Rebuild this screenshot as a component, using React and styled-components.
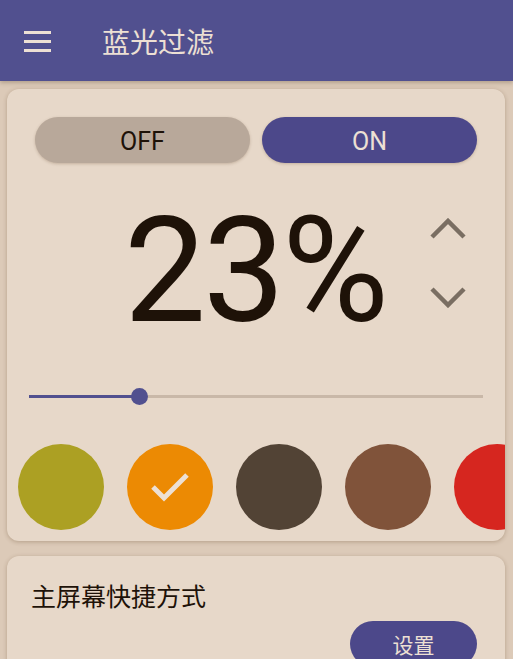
import React from 'react';
import styled, { createGlobalStyle } from 'styled-components';

const GlobalStyle = createGlobalStyle`
  html, body {
    margin: 0;
    padding: 0;
    background: #dccab8;
    font-family: Roboto, "Noto Sans CJK SC", sans-serif;
    overflow: hidden;
  }
`;

const AppBar = styled.header`
  height: 81px;
  background: #51508f;
  display: flex;
  align-items: center;
  padding-left: 24px;
  box-shadow: 0 2px 4px rgba(60, 40, 20, 0.25);
  position: relative;
  z-index: 1;
`;

const MenuIcon = styled.div`
  width: 27px;
  display: flex;
  flex-direction: column;
  gap: 6px;
  margin-right: 51px;
  margin-top: 1px;
  span {
    display: block;
    height: 3px;
    background: #ede0d4;
  }
`;

const Title = styled.h1`
  margin: 0;
  font-family: "Noto Sans CJK SC", sans-serif;
  font-weight: 400;
  font-size: 28px;
  color: #ede0d4;
`;

const Page = styled.main`
  padding: 8px 8px 0 7px;
  display: flex;
  flex-direction: column;
  gap: 15px;
`;

const Card = styled.section`
  background: #e7d8c9;
  border-radius: 12px;
  box-shadow: 0 1px 4px rgba(90, 60, 30, 0.3);
  overflow: hidden;
`;

const ToggleRow = styled.div`
  display: grid;
  grid-template-columns: 1fr 1fr;
  gap: 12px;
  padding: 28px 28px 0;
`;

const Toggle = styled.button`
  height: 46px;
  border: none;
  border-radius: 23px;
  font-family: Roboto, sans-serif;
  font-size: 25px;
  padding: 2px 0 0;
  background: ${p => (p.$active ? '#4c488a' : '#b8a89a')};
  color: ${p => (p.$active ? '#ede0d4' : '#1e1208')};
  box-shadow: 0 1px 3px rgba(90, 60, 30, 0.25);
`;

const PercentRow = styled.div`
  display: grid;
  grid-template-columns: 1fr auto 1fr;
  align-items: start;
  margin-top: 36px;
`;

const Percent = styled.div`
  grid-column: 2;
  font-family: Roboto, sans-serif;
  font-size: 146px;
  line-height: 1;
  color: #1e1208;
  letter-spacing: -3px;
  padding-right: 2px;
`;

const Arrows = styled.div`
  grid-column: 3;
  justify-self: end;
  margin-right: 39px;
  margin-top: 19px;
  display: flex;
  flex-direction: column;
  gap: 46px;
`;

const Slider = styled.div`
  margin: 43px 22px 0;
  height: 16px;
  position: relative;
  display: flex;
  align-items: center;
`;

const Track = styled.div`
  flex: 1;
  height: 3px;
  background: #c9b8a8;
  position: relative;
`;

const Fill = styled.div`
  position: absolute;
  left: 0;
  top: 0;
  height: 3px;
  background: #51508f;
`;

const Thumb = styled.div`
  position: absolute;
  top: -7px;
  width: 17px;
  height: 17px;
  margin-left: -8px;
  border-radius: 50%;
  background: #51508f;
`;

const Swatches = styled.div`
  display: flex;
  gap: 23px;
  padding: 40px 0 11px 11px;
`;

const Swatch = styled.div`
  flex: 0 0 86px;
  height: 86px;
  border-radius: 50%;
  background: ${p => p.$color};
  display: flex;
  align-items: center;
  justify-content: center;
`;

const ShortcutCard = styled(Card)`
  padding: 27px 28px 20px 24px;
`;

const ShortcutTitle = styled.div`
  font-family: "Noto Sans CJK SC", sans-serif;
  font-size: 25px;
  color: #1e1208;
  line-height: 1;
`;

const SetButton = styled.button`
  display: block;
  margin: 13px 0 0 auto;
  width: 127px;
  height: 46px;
  border: none;
  border-radius: 23px;
  background: #4c488a;
  color: #ede0d4;
  font-family: "Noto Sans CJK SC", sans-serif;
  font-size: 21px;
`;

const Chevron = ({ down }) => (
  <svg width="36" height="22" viewBox="0 0 36 22">
    <polyline
      points={down ? '2,3 18,19 34,3' : '2,19 18,3 34,19'}
      fill="none"
      stroke="#7a6e62"
      strokeWidth="4.5"
    />
  </svg>
);

const colors = ['#aca023', '#ec8a03', '#524335', '#80533a', '#d6261f'];

export default function App() {
  const value = 23;
  const pos = '24.2%';
  return (
    <>
      <GlobalStyle />
      <AppBar>
        <MenuIcon>
          <span />
          <span />
          <span />
        </MenuIcon>
        <Title>蓝光过滤</Title>
      </AppBar>
      <Page>
        <Card>
          <ToggleRow>
            <Toggle>OFF</Toggle>
            <Toggle $active>ON</Toggle>
          </ToggleRow>
          <PercentRow>
            <Percent>{value}%</Percent>
            <Arrows>
              <Chevron />
              <Chevron down />
            </Arrows>
          </PercentRow>
          <Slider>
            <Track>
              <Fill style={{ width: pos }} />
              <Thumb style={{ left: pos }} />
            </Track>
          </Slider>
          <Swatches>
            {colors.map((c, i) => (
              <Swatch key={c} $color={c}>
                {i === 1 && (
                  <svg width="40" height="34" viewBox="0 0 40 34">
                    <polyline points="3,17 14,28 37,5" fill="none" stroke="#ede0d4" strokeWidth="5" />
                  </svg>
                )}
              </Swatch>
            ))}
          </Swatches>
        </Card>
        <ShortcutCard>
          <ShortcutTitle>主屏幕快捷方式</ShortcutTitle>
          <SetButton>设置</SetButton>
        </ShortcutCard>
      </Page>
    </>
  );
}
